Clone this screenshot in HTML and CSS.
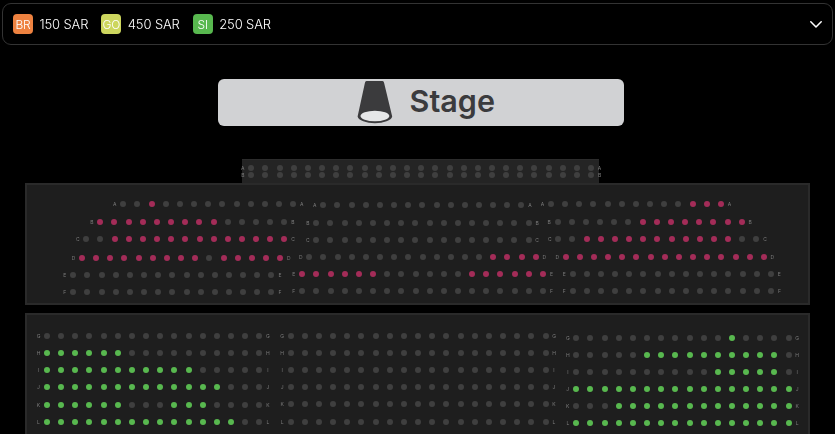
FILE: index.html
```html
<!DOCTYPE html>
<html lang="en">
<head>
<meta charset="utf-8">
<title>Seat map</title>
<link rel="stylesheet" href="styles.css">
</head>
<body>
<header class="legend">
  <div class="legend-items">
    <div class="tier"><span class="badge badge-br">BR</span><span>150 SAR</span></div>
    <div class="tier"><span class="badge badge-go">GO</span><span>450 SAR</span></div>
    <div class="tier"><span class="badge badge-si">SI</span><span>250 SAR</span></div>
  </div>
  <svg class="chevron" viewBox="0 0 12 7" width="12" height="7" aria-hidden="true"><path d="M.8.8L6 6l5.2-5.2" fill="none" stroke="#fff" stroke-width="1.5" stroke-linecap="round" stroke-linejoin="round"/></svg>
</header>
<div class="stage">
  <svg class="stage-icon" viewBox="0 0 36 44" width="36" height="44" aria-hidden="true">
    <path d="M8 1.5Q8.2 0 9.5 0H25.5Q26.8 0 27 1.5L35.2 35.5A17.4 7.6 0 0 1 .6 35.5Z" fill="#3b3b3d"/>
    <ellipse cx="17.9" cy="35" rx="14.4" ry="5.3" fill="#e6e7e8"/>
  </svg>
  <span class="stage-label">Stage</span>
</div>
<main class="map">
  <section class="panel panel-top" id="top"></section>
  <section class="panel panel-main" id="bronze"></section>
  <section class="panel panel-main panel-silver" id="silver"></section>
</main>
<script src="script.js"></script>
</body>
</html>
```
FILE: styles.css
```css
* { box-sizing: border-box; }
html, body { margin: 0; height: 100%; }
body {
  background: #000;
  color: #fff;
  font-family: Inter, "Liberation Sans", sans-serif;
  overflow: hidden;
}
.legend {
  display: flex;
  align-items: center;
  justify-content: space-between;
  height: 42px;
  margin: 3px 2px 0;
  padding: 0 10px 0 10px;
  border: 1px solid #333;
  border-radius: 9px;
  will-change: transform;
}
.legend-items { display: flex; gap: 13px; }
.tier {
  display: flex;
  align-items: center;
  gap: 6.5px;
  font-size: 13px;
  font-weight: 300;
  letter-spacing: -0.13px;
}
.badge {
  display: flex;
  align-items: center;
  justify-content: center;
  width: 20px;
  height: 20px;
  border-radius: 4px;
  font-size: 12px;
  font-weight: 300;
}
.badge-br { background: #ee8240; }
.badge-go { background: #cdd65e; }
.badge-si { background: #58b84f; }
.stage {
  display: flex;
  align-items: center;
  justify-content: center;
  gap: 17px;
  width: 406.5px;
  height: 47px;
  margin: 34px 0 0 217.5px;
  padding-left: 10px;
  background: #d1d2d4;
  border-radius: 6px;
  color: #3b3b3d;
}
.stage-icon { display: block; margin-top: 1px; }
.stage-label { font-size: 30.5px; font-weight: 600; line-height: 1; margin-top: -3px; }
.map { margin-top: 33px; will-change: transform; }
.panel { display: grid; }
.panel-top {
  width: 357px;
  height: 24px;
  margin-left: 242px;
  background: #242424;
  border-top: 1px solid #2c2c2c;
}
.panel-main {
  height: 122px;
  margin: 0 25px;
  background: #1e1e1e;
  border: 2px solid #2a2a2a;
}
.panel-silver { height: 132px; margin-top: 8px; }
.block { grid-area: 1 / 1; min-width: 0; }
.row { display: flex; align-items: center; height: 6px; }
.row-label {
  flex: none;
  width: 8px;
  font-size: 5px;
  line-height: 6px;
  text-align: center;
  color: #7c7c7c;
}
.row-label:first-child { margin-right: 1.5px; }
.row-label:last-child { margin-left: 1.5px; }
.seats { display: flex; flex: none; gap: 8.17px; }
.seat { flex: none; width: 6px; height: 6px; border-radius: 50%; background: #3f3f3f; }
.seat-br { background: #a32c58; }
.seat-si { background: #58b84f; }
```
FILE: script.js
```js
var g = function (n) { return '.'.repeat(n); };
var x = function (n) { return 'x'.repeat(n); };

var panels = {
  top: {
    left: 242, top: 160, cls: 'seat-br',
    blocks: [[
      ['A', 251.3, 167.7, g(25)],
      ['B', 251.3, 175.3, g(25)]
    ]]
  },
  bronze: {
    left: 27, top: 185, cls: 'seat-br',
    blocks: [[
      ['A', 123.3, 204, '..x' + g(10)],
      ['B', 100.3, 221.7, x(9) + g(5)],
      ['C', 86.3, 238.7, g(2) + x(13)],
      ['D', 82, 257.7, x(9) + g(1) + x(5)],
      ['E', 73.3, 274.7, g(15)],
      ['F', 73.3, 292, g(15)]
    ], [
      ['A', 323.3, 205, g(15)],
      ['B', 316.3, 223.3, g(16)],
      ['C', 316.3, 240.3, g(16)],
      ['D', 309.3, 257.3, g(13) + x(4)],
      ['E', 302.3, 274.3, x(6) + g(6) + x(6)],
      ['F', 302.3, 291.3, g(18)]
    ], [
      ['A', 551, 204.3, g(10) + x(3)],
      ['B', 557.7, 222, g(6) + x(8)],
      ['C', 558.3, 239, g(2) + x(11) + g(2)],
      ['D', 565.7, 256.7, x(15)],
      ['E', 572.7, 274.3, g(15)],
      ['F', 572.7, 291.3, g(15)]
    ]]
  },
  silver: {
    left: 27, top: 315, cls: 'seat-si',
    blocks: [[
      ['G', 47, 336, g(16)],
      ['H', 47, 353.3, x(6) + g(10)],
      ['I', 47, 370.3, x(11) + g(5)],
      ['J', 47, 387.3, x(13) + g(3)],
      ['K', 47, 404.7, x(6) + g(3) + x(3) + g(4)],
      ['L', 47, 421.7, x(14) + g(2)]
    ], [
      ['G', 290.7, 336, g(19)],
      ['H', 290.7, 353.3, g(19)],
      ['I', 290.7, 370.3, g(19)],
      ['J', 290.7, 387.3, g(19)],
      ['K', 290.7, 404.3, g(19)],
      ['L', 290.7, 421.7, g(19)]
    ], [
      ['G', 576.3, 337.7, g(11) + x(1) + g(4)],
      ['H', 576.3, 354.7, g(5) + x(10) + g(1)],
      ['I', 576.3, 372, g(10) + x(5) + g(1)],
      ['J', 576.3, 389, x(16)],
      ['K', 576.3, 406, g(3) + x(13)],
      ['L', 576.3, 423.3, x(16)]
    ]]
  }
};

function el(cls, text) {
  var node = document.createElement('div');
  node.className = cls;
  if (text) node.textContent = text;
  return node;
}

Object.keys(panels).forEach(function (id) {
  var panel = panels[id];
  var host = document.getElementById(id);
  panel.blocks.forEach(function (rows) {
    var block = el('block');
    var cursor = panel.top;
    rows.forEach(function (r) {
      var row = el('row');
      row.style.marginLeft = (r[1] - 3 - 9.5 - panel.left) + 'px';
      row.style.marginTop = (r[2] - 3 - cursor) + 'px';
      cursor = r[2] + 3;
      row.appendChild(el('row-label', r[0]));
      var seats = el('seats');
      r[3].split('').forEach(function (c) {
        seats.appendChild(el(c === 'x' ? 'seat ' + panel.cls : 'seat'));
      });
      row.appendChild(seats);
      row.appendChild(el('row-label', r[0]));
      block.appendChild(row);
    });
    host.appendChild(block);
  });
});
```
